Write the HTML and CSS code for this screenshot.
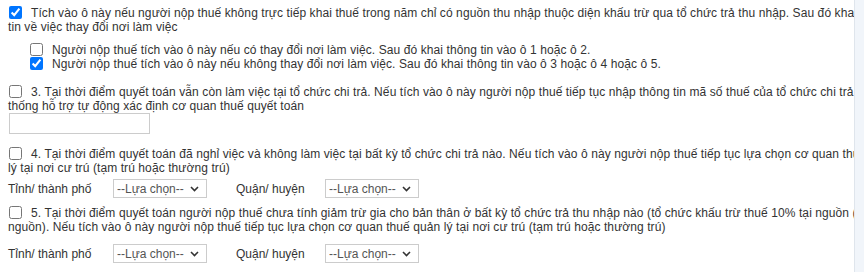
FILE: index.html
```html
<!DOCTYPE html>
<html lang="vi">
<head>
<meta charset="utf-8">
<title>Quyết toán thuế</title>
<link rel="stylesheet" href="styles.css">
</head>
<body>
<div class="panel">
  <div class="line"><input type="checkbox" class="chk" checked>Tích vào ô này nếu người nộp thuế không trực tiếp khai thuế trong năm chỉ có nguồn thu nhập thuộc diện khấu trừ qua tổ chức trả thu nhập. Sau đó khai thông<br>tin về việc thay đổi nơi làm việc</div>
  <div class="sub">
    <div class="line"><input type="checkbox" class="chk">Người nộp thuế tích vào ô này nếu có thay đổi nơi làm việc. Sau đó khai thông tin vào ô 1 hoặc ô 2.</div>
    <div class="line"><input type="checkbox" class="chk" checked>Người nộp thuế tích vào ô này nếu không thay đổi nơi làm việc. Sau đó khai thông tin vào ô 3 hoặc ô 4 hoặc ô 5.</div>
  </div>
  <div class="line item3"><input type="checkbox" class="chk">3. Tại thời điểm quyết toán vẫn còn làm việc tại tổ chức chi trả. Nếu tích vào ô này người nộp thuế tiếp tục nhập thông tin mã số thuế của tổ chức chi trả hệ<br>thống hỗ trợ tự động xác định cơ quan thuế quyết toán</div>
  <input type="text" class="txt">
  <div class="line item4"><input type="checkbox" class="chk">4. Tại thời điểm quyết toán đã nghỉ việc và không làm việc tại bất kỳ tổ chức chi trả nào. Nếu tích vào ô này người nộp thuế tiếp tục lựa chọn cơ quan thuế quản<br>lý tại nơi cư trú (tạm trú hoặc thường trú)</div>
  <div class="row row4">
    <span class="lbl1">Tỉnh/ thành phố</span>
    <span class="sel"><select><option>--Lựa chọn--</option></select><svg class="chev" width="9" height="6" viewBox="0 0 9 6"><path d="M1 1 L4.5 4.5 L8 1" fill="none" stroke="#333" stroke-width="1.6"/></svg></span>
    <span class="lbl2">Quận/ huyện</span>
    <span class="sel"><select><option>--Lựa chọn--</option></select><svg class="chev" width="9" height="6" viewBox="0 0 9 6"><path d="M1 1 L4.5 4.5 L8 1" fill="none" stroke="#333" stroke-width="1.6"/></svg></span>
  </div>
  <div class="line item5"><input type="checkbox" class="chk">5. Tại thời điểm quyết toán người nộp thuế chưa tính giảm trừ gia cho bản thân ở bất kỳ tổ chức trả thu nhập nào (tổ chức khấu trừ thuế 10% tại nguồn (không khấu trừ tại<br>nguồn). Nếu tích vào ô này người nộp thuế tiếp tục lựa chọn cơ quan thuế quản lý tại nơi cư trú (tạm trú hoặc thường trú)</div>
  <div class="row row5">
    <span class="lbl1">Tỉnh/ thành phố</span>
    <span class="sel"><select><option>--Lựa chọn--</option></select><svg class="chev" width="9" height="6" viewBox="0 0 9 6"><path d="M1 1 L4.5 4.5 L8 1" fill="none" stroke="#333" stroke-width="1.6"/></svg></span>
    <span class="lbl2">Quận/ huyện</span>
    <span class="sel"><select><option>--Lựa chọn--</option></select><svg class="chev" width="9" height="6" viewBox="0 0 9 6"><path d="M1 1 L4.5 4.5 L8 1" fill="none" stroke="#333" stroke-width="1.6"/></svg></span>
  </div>
</div>
</body>
</html>
```
FILE: styles.css
```css
html, body {
  margin: 0;
  padding: 0;
}
body {
  font-family: "Liberation Sans", Arial, sans-serif;
  font-size: 12px;
  color: #333;
  background: #f1f5fa;
}
.panel {
  width: 846px;
  height: 266px;
  padding: 6px 0 0 8px;
  background: #fff;
  border-right: 1px solid #dfe5ec;
  overflow: hidden;
}
.line {
  white-space: nowrap;
  line-height: 14px;
  letter-spacing: 0.09px;
}
.chk {
  width: 13px;
  height: 13px;
  margin: 0 9px 0 1px;
  vertical-align: top;
}
.sub {
  margin-top: 9px;
  padding-left: 21px;
}
.item3 {
  margin-top: 14px;
}
.txt {
  display: block;
  box-sizing: border-box;
  width: 141px;
  height: 21px;
  margin: 0 0 0 1px;
  padding: 0 3px;
  border: 1px solid #ccc;
  border-radius: 0;
  outline: none;
}
.item4 {
  margin-top: 13px;
}
.row {
  display: flex;
  align-items: center;
  height: 19px;
}
.row4 {
  margin-top: 4px;
}
.item5 {
  margin-top: 8px;
}
.row5 {
  margin-top: 10px;
}
.lbl1 {
  width: 105px;
}
.lbl2 {
  width: 89px;
  margin-left: 29px;
}
.sel {
  position: relative;
  display: block;
  width: 94px;
  height: 19px;
}
.sel select {
  appearance: none;
  -webkit-appearance: none;
  display: block;
  box-sizing: border-box;
  width: 100%;
  height: 100%;
  margin: 0;
  padding: 0 0 0 3px;
  border: 1px solid #ccc;
  border-radius: 0;
  background: #fff;
  font-family: "Liberation Sans", Arial, sans-serif;
  font-size: 12px;
  color: #555;
}
.chev {
  position: absolute;
  right: 8px;
  top: 7px;
  pointer-events: none;
}
```
